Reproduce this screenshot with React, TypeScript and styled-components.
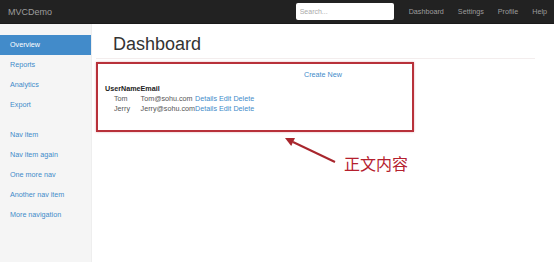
import React from "react";
import styled, { createGlobalStyle } from "styled-components";

const Global = createGlobalStyle`
  html, body { margin: 0; padding: 0; background: #fff; }
  body { font-family: "Liberation Sans", Arial, sans-serif; font-size: 7.2px; color: #333; }
  * { box-sizing: border-box; }
`;

const Page = styled.div`
  position: relative;
  width: 554px;
  height: 262px;
  overflow: hidden;
`;

const Navbar = styled.div`
  height: 24px;
  background: #222;
  border-bottom: 1px solid #1a1a1a;
  display: flex;
  align-items: center;
`;

const Brand = styled.div`
  font-size: 9px;
  color: #9d9d9d;
  padding-left: 8px;
  flex: 1;
`;

const Search = styled.input`
  width: 98px;
  height: 17px;
  border: none;
  border-radius: 2px;
  background: #fff;
  padding: 0 4px;
  font-family: inherit;
  font-size: 7px;
  margin-right: 8px;
  &::placeholder { color: #aaa; }
`;

const TopLink = styled.a`
  color: #9d9d9d;
  padding: 0 7px;
  font-size: 7.2px;
  text-decoration: none;
`;

const Body = styled.div`
  display: flex;
  height: 238px;
`;

const Sidebar = styled.div`
  width: 92px;
  background: #f5f5f5;
  border-right: 1px solid #eee;
  padding-top: 11px;
`;

const NavList = styled.ul`
  list-style: none;
  margin: 0 0 10px;
  padding: 0;
`;

const NavItem = styled.li<{ $active?: boolean }>`
  height: 20px;
  line-height: 20px;
  padding: 0 10px;
  font-size: 7.2px;
  color: ${(p) => (p.$active ? "#fff" : "#428bca")};
  background: ${(p) => (p.$active ? "#428bca" : "transparent")};
`;

const Main = styled.div`
  flex: 1;
  padding: 10px 19px 0 4px;
`;

const Header = styled.h1`
  margin: 0;
  font-size: 18px;
  line-height: 20px;
  font-weight: 400;
  color: #333;
  padding: 0 0 4px 17px;
  border-bottom: 1px solid #f3eded;
`;

const Content = styled.div`
  padding: 11px 0 0 9px;
`;

const CreateRow = styled.p`
  margin: 0 0 4px 199px;
  line-height: 10px;
  color: #428bca;
`;

const Table = styled.table`
  border-collapse: collapse;
  border-spacing: 0;
  font-size: 7.2px;
  th { text-align: left; font-weight: 700; padding: 0; line-height: 10px; color: #222; }
  td { padding: 0; line-height: 10px; color: #555; white-space: nowrap; }
  td.first { padding-left: 9px; }
`;

const Link = styled.a`
  color: #428bca;
  text-decoration: none;
`;

const MarkBox = styled.div`
  position: absolute;
  left: 96px;
  top: 62px;
  width: 318px;
  height: 70px;
  border: 2px solid #b8313a;
  box-shadow: 0 0 2px rgba(200, 80, 90, 0.45);
`;

const Arrow = styled.svg`
  position: absolute;
  left: 280px;
  top: 130px;
`;

const Note = styled.div`
  position: absolute;
  left: 344px;
  top: 155px;
  font-family: "Noto Sans CJK SC", sans-serif;
  font-size: 16px;
  line-height: 17px;
  color: #b5202e;
`;

const rows = [
  { name: "Tom", email: "Tom@sohu.com" },
  { name: "Jerry", email: "Jerry@sohu.com" },
];

export default function App() {
  return (
    <Page>
      <Global />
      <Navbar>
        <Brand>MVCDemo</Brand>
        <Search placeholder="Search..." />
        <TopLink>Dashboard</TopLink>
        <TopLink>Settings</TopLink>
        <TopLink>Profile</TopLink>
        <TopLink>Help</TopLink>
      </Navbar>
      <Body>
        <Sidebar>
          <NavList>
            <NavItem $active>Overview</NavItem>
            <NavItem>Reports</NavItem>
            <NavItem>Analytics</NavItem>
            <NavItem>Export</NavItem>
          </NavList>
          <NavList>
            <NavItem>Nav item</NavItem>
            <NavItem>Nav item again</NavItem>
            <NavItem>One more nav</NavItem>
            <NavItem>Another nav item</NavItem>
            <NavItem>More navigation</NavItem>
          </NavList>
        </Sidebar>
        <Main>
          <Header>Dashboard</Header>
          <Content>
            <CreateRow>Create New</CreateRow>
            <Table>
              <thead>
                <tr>
                  <th>UserName</th>
                  <th>Email</th>
                  <th></th>
                </tr>
              </thead>
              <tbody>
                {rows.map((r) => (
                  <tr key={r.name}>
                    <td className="first">{r.name}</td>
                    <td>{r.email}</td>
                    <td>
                      <Link>Details</Link> <Link>Edit</Link> <Link>Delete</Link>
                    </td>
                  </tr>
                ))}
              </tbody>
            </Table>
          </Content>
        </Main>
      </Body>
      <MarkBox />
      <Arrow width="60" height="40" viewBox="0 0 60 40">
        <line x1="13" y1="12" x2="55" y2="32" stroke="#a8262d" strokeWidth="2" />
        <polygon points="5,8 15,8 11.2,16" fill="#a8262d" />
      </Arrow>
      <Note>正文内容</Note>
    </Page>
  );
}
